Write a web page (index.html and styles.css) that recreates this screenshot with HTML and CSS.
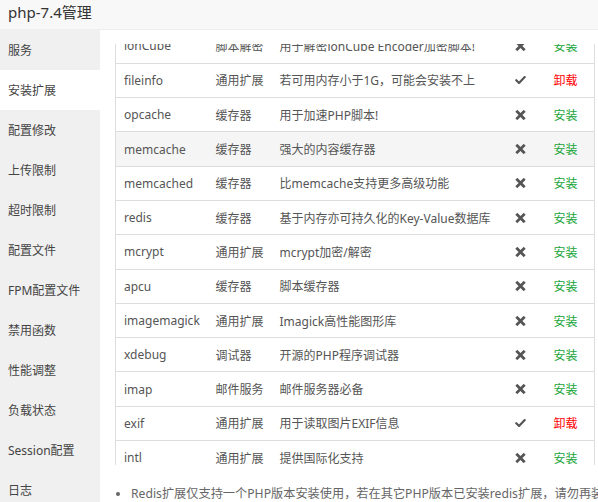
FILE: index.html
```html
<!DOCTYPE html>
<html lang="zh-CN">
<head>
    <meta charset="UTF-8">
    <title>php-7.4管理</title>
    <link rel="stylesheet" href="styles.css">
</head>
<body>
    <div class="layer-title">php-7.4管理</div>
    <div class="layer-body">
        <ul class="side-menu">
            <li>服务</li>
            <li class="active">安装扩展</li>
            <li>配置修改</li>
            <li>上传限制</li>
            <li>超时限制</li>
            <li>配置文件</li>
            <li>FPM配置文件</li>
            <li>禁用函数</li>
            <li>性能调整</li>
            <li>负载状态</li>
            <li>Session配置</li>
            <li>日志</li>
        </ul>
        <div class="main">
            <div class="table-box">
                <table class="ext-table">
                    <colgroup>
                        <col style="width:92px">
                        <col style="width:64px">
                        <col>
                        <col style="width:41px">
                        <col style="width:49px">
                    </colgroup>
                    <tbody>
                        <tr><td>ionCube</td><td>脚本解密</td><td>用于解密ionCube Encoder加密脚本!</td><td class="st"><svg class="ic"><use href="#i-x"/></svg></td><td><a class="btn-install">安装</a></td></tr>
                        <tr><td>fileinfo</td><td>通用扩展</td><td>若可用内存小于1G，可能会安装不上</td><td class="st"><svg class="ic"><use href="#i-ok"/></svg></td><td><a class="btn-remove">卸载</a></td></tr>
                        <tr><td>opcache</td><td>缓存器</td><td>用于加速PHP脚本!</td><td class="st"><svg class="ic"><use href="#i-x"/></svg></td><td><a class="btn-install">安装</a></td></tr>
                        <tr class="hover"><td>memcache</td><td>缓存器</td><td>强大的内容缓存器</td><td class="st"><svg class="ic"><use href="#i-x"/></svg></td><td><a class="btn-install">安装</a></td></tr>
                        <tr><td>memcached</td><td>缓存器</td><td>比memcache支持更多高级功能</td><td class="st"><svg class="ic"><use href="#i-x"/></svg></td><td><a class="btn-install">安装</a></td></tr>
                        <tr><td>redis</td><td>缓存器</td><td>基于内存亦可持久化的Key-Value数据库</td><td class="st"><svg class="ic"><use href="#i-x"/></svg></td><td><a class="btn-install">安装</a></td></tr>
                        <tr><td>mcrypt</td><td>通用扩展</td><td>mcrypt加密/解密</td><td class="st"><svg class="ic"><use href="#i-x"/></svg></td><td><a class="btn-install">安装</a></td></tr>
                        <tr><td>apcu</td><td>缓存器</td><td>脚本缓存器</td><td class="st"><svg class="ic"><use href="#i-x"/></svg></td><td><a class="btn-install">安装</a></td></tr>
                        <tr><td>imagemagick</td><td>通用扩展</td><td>Imagick高性能图形库</td><td class="st"><svg class="ic"><use href="#i-x"/></svg></td><td><a class="btn-install">安装</a></td></tr>
                        <tr><td>xdebug</td><td>调试器</td><td>开源的PHP程序调试器</td><td class="st"><svg class="ic"><use href="#i-x"/></svg></td><td><a class="btn-install">安装</a></td></tr>
                        <tr><td>imap</td><td>邮件服务</td><td>邮件服务器必备</td><td class="st"><svg class="ic"><use href="#i-x"/></svg></td><td><a class="btn-install">安装</a></td></tr>
                        <tr><td>exif</td><td>通用扩展</td><td>用于读取图片EXIF信息</td><td class="st"><svg class="ic"><use href="#i-ok"/></svg></td><td><a class="btn-remove">卸载</a></td></tr>
                        <tr><td>intl</td><td>通用扩展</td><td>提供国际化支持</td><td class="st"><svg class="ic"><use href="#i-x"/></svg></td><td><a class="btn-install">安装</a></td></tr>
                    </tbody>
                </table>
            </div>
            <ul class="help">
                <li>Redis扩展仅支持一个PHP版本安装使用，若在其它PHP版本已安装redis扩展，请勿再装</li>
            </ul>
        </div>
    </div>

    <svg width="0" height="0" style="position:absolute">
        <symbol id="i-x" viewBox="0 0 10 10">
            <path d="M1.8 1.8 L8.2 8.2 M8.2 1.8 L1.8 8.2" stroke="currentColor" stroke-width="2.8" stroke-linecap="square"/>
        </symbol>
        <symbol id="i-ok" viewBox="0 0 12 10">
            <path d="M1.4 5.2 L4.4 8.2 L10.6 1.8" fill="none" stroke="currentColor" stroke-width="2.4" stroke-linecap="round" stroke-linejoin="round"/>
        </symbol>
    </svg>
</body>
</html>
```

FILE: styles.css
```css
* {
    box-sizing: border-box;
    margin: 0;
    padding: 0;
}

body {
    font-family: "Noto Sans", "Noto Sans CJK SC", sans-serif;
    font-size: 12px;
    color: #555;
    background: #fff;
    overflow: hidden;
    height: 502px;
}

.layer-title {
    height: 30px;
    line-height: 24px;
    padding-left: 8px;
    font-size: 15px;
    color: #333;
    background: #f8f8f8;
    border-bottom: 1px solid #eee;
}

.layer-body {
    display: flex;
    height: 472px;
}

.side-menu {
    list-style: none;
    width: 100px;
    flex-shrink: 0;
    background: #f0f0f0;
}

.side-menu li {
    height: 40px;
    line-height: 42px;
    padding-left: 8px;
    color: #444;
    white-space: nowrap;
}

.side-menu li.active {
    background: #fff;
}

.main {
    flex: 1;
    min-width: 0;
    padding: 14px 3px 0 15px;
}

.table-box {
    height: 421px;
    overflow: hidden;
}

.ext-table {
    width: 100%;
    table-layout: fixed;
    border-collapse: collapse;
    border-left: 1px solid #ddd;
    border-right: 1px solid #ddd;
    margin-top: -15px;
}

.ext-table td {
    height: 34.3px;
    padding: 0 8px;
    border-bottom: 1px solid #ddd;
    white-space: nowrap;
    overflow: hidden;
}

.ext-table tr.hover td {
    background: #f5f5f5;
}

.ext-table td.st {
    color: #555;
    padding: 0 0 0 10px;
}

.ic {
    width: 11px;
    height: 10px;
    display: block;
}

.btn-install {
    color: #20a53a;
}

.btn-remove {
    color: #f00;
}

.help {
    margin-top: 19px;
    padding-left: 16px;
    white-space: nowrap;
    color: #666;
    font-size: 12.2px;
}

.help li {
    line-height: 20px;
}
```
